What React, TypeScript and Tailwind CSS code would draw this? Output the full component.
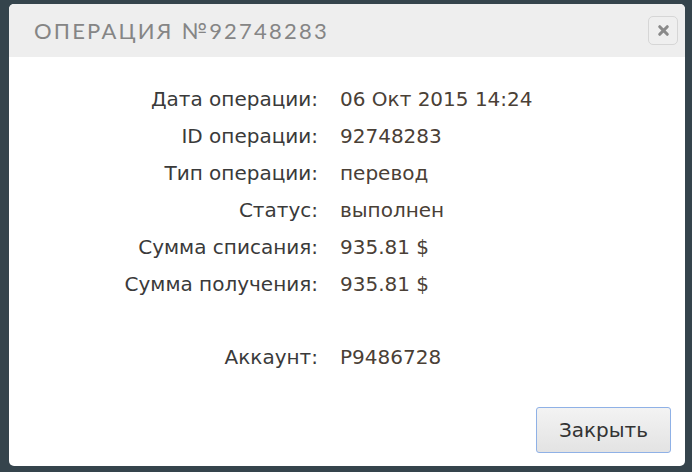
import { X } from 'lucide-react';

const rows = [
    { label: 'Дата операции:', value: '06 Окт 2015 14:24' },
    { label: 'ID операции:', value: '92748283' },
    { label: 'Тип операции:', value: 'перевод' },
    { label: 'Статус:', value: 'выполнен' },
    { label: 'Сумма списания:', value: '935.81 $' },
    { label: 'Сумма получения:', value: '935.81 $' },
];

export default function App() {
    return (
        <div className="w-[692px] h-[472px] bg-[#35444c] pt-[4px] pl-[9px] overflow-hidden">
            <div className="w-[676px] h-[462px] bg-white rounded-[5px] overflow-hidden flex flex-col">
                <div className="h-[53px] bg-[#eeeeee] flex items-center justify-between pl-[25px] pr-[7px]">
                    <h1 className="text-[22px] tracking-[2.2px] text-[#858585] font-['Lato',sans-serif] leading-none">
                        ОПЕРАЦИЯ №92748283
                    </h1>
                    <button className="w-[30px] h-[29px] rounded-[5px] border border-[#d6d6d6] bg-[#efefef] flex items-center justify-center text-[#8a8a8a]">
                        <X className="w-[15px] h-[15px]" strokeWidth={5} />
                    </button>
                </div>

                <div className="flex-1 flex flex-col font-['DejaVu_Sans',sans-serif] text-[20px] text-[#3a3a3a] pt-[24px]">
                    <div className="grid grid-cols-[309px_1fr] gap-x-[22px]">
                        {rows.map((row) => (
                            <div key={row.label} className="contents">
                                <div className="text-right h-[37px] leading-[37px]">{row.label}</div>
                                <div className="h-[37px] leading-[37px] text-[#4a4036]">{row.value}</div>
                            </div>
                        ))}
                        <div className="h-[36px]" />
                        <div className="h-[36px]" />
                        <div className="text-right h-[37px] leading-[37px]">Аккаунт:</div>
                        <div className="h-[37px] leading-[37px] text-[#4a4036]">P9486728</div>
                    </div>

                    <div className="mt-auto flex justify-end pr-[14px] pb-[13px]">
                        <button className="w-[135px] h-[46px] rounded-[3px] border border-[#8fb1e6] bg-gradient-to-b from-[#f3f3f3] to-[#e3e3e3] text-[20px] text-[#333] font-['DejaVu_Sans',sans-serif]">
                            Закрыть
                        </button>
                    </div>
                </div>
            </div>
        </div>
    );
}
